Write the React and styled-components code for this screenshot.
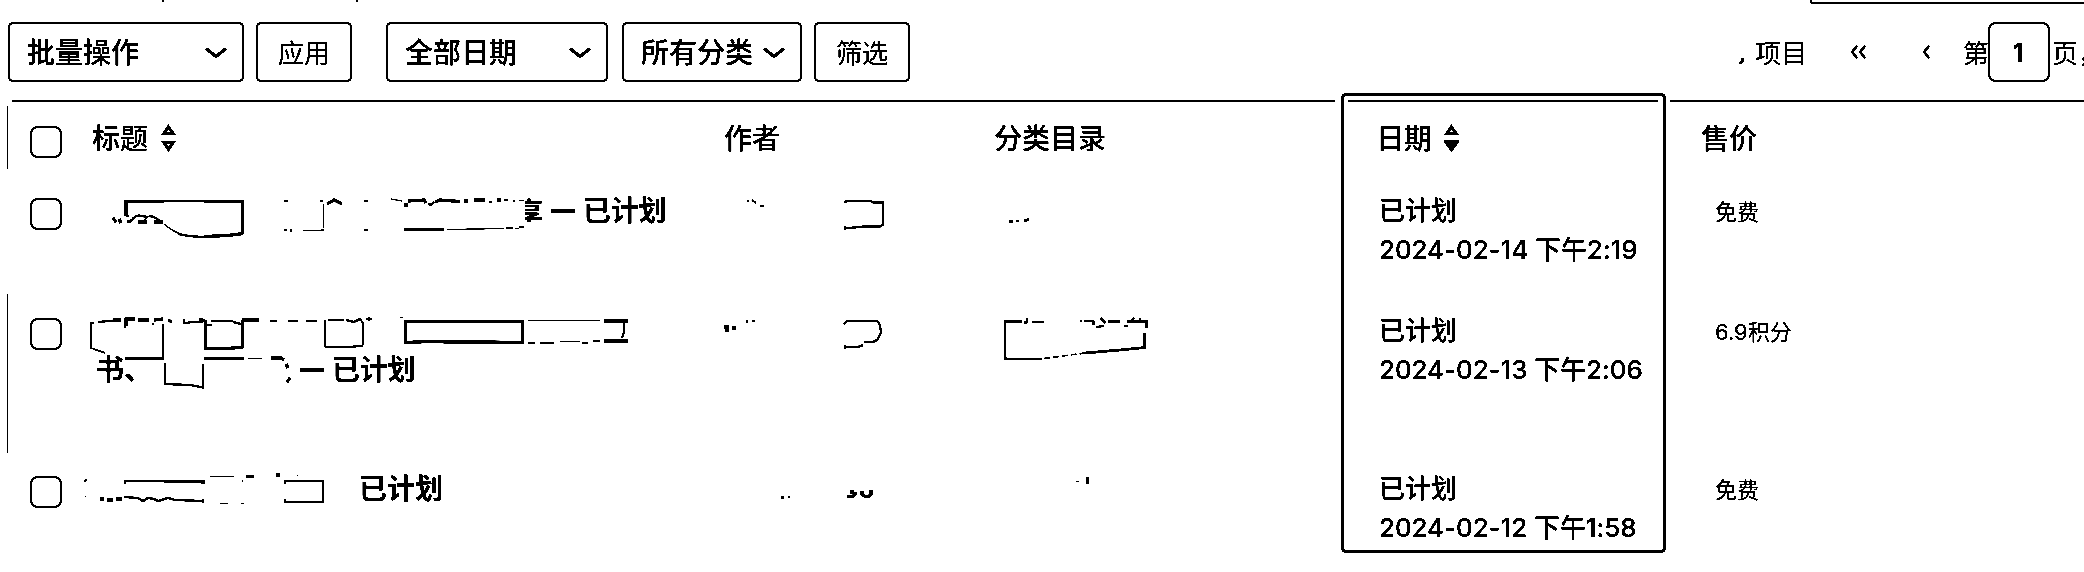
import React from "react";
import styled, { createGlobalStyle } from "styled-components";

const Global = createGlobalStyle`
  * { box-sizing: border-box; }
  body { margin: 0; background: #fff; overflow: hidden; }
`;

const Page = styled.div`
  position: relative;
  width: 2084px;
  height: 572px;
  overflow: hidden;
  background: #fff;
  color: #000;
  font-family: Inter, "Noto Sans CJK SC", sans-serif;
  font-size: 28px;
  line-height: 40px;
  filter: grayscale(1) brightness(0.76) contrast(30);
`;

const TopStrip = styled.div`
  display: flex;
  height: 4px;
  padding-left: 162px;
`;
const Divider = styled.span`
  width: 2px;
  height: 2px;
  flex: none;
  margin-right: 192px;
  background: #000;
`;
const SearchEdge = styled.span`
  width: 300px;
  height: 12px;
  flex: none;
  align-self: flex-end;
  margin-left: 1259px;
  border: 2px solid #000;
  border-radius: 3px;
  margin-left: 1260px;
`;

const Toolbar = styled.div`
  display: flex;
  align-items: center;
  height: 60px;
  margin: 18px 0 0 8px;
  white-space: nowrap;
`;
const Control = styled.div`
  display: flex;
  flex: none;
  align-items: center;
  justify-content: ${(p) => (p.$select ? "space-between" : "center")};
  width: ${(p) => p.$w}px;
  height: 60px;
  padding: ${(p) => (p.$select ? "2px 15px 0 17px" : "3px 0 0")};
  margin-right: ${(p) => p.$gap || 0}px;
  border: 2px solid #000;
  border-radius: 5px;
  font-size: ${(p) => (p.$select ? 28 : 26)}px;
  font-weight: ${(p) => (p.$select ? 500 : 400)};
`;
const Pager = styled.div`
  display: flex;
  flex: none;
  align-items: center;
  margin-left: 827px;
  font-size: 26px;
`;
const PagerText = styled.span`
  width: ${(p) => p.$w}px;
  flex: none;
  padding-top: 3px;
`;
const PageInput = styled.div`
  width: 62px;
  height: 60px;
  flex: none;
  border: 2px solid #000;
  border-radius: 8px;
  font-size: 25px;
  font-weight: 700;
  line-height: 58px;
  text-align: center;
  padding-right: 1px;
  margin-right: 2px;
`;

const TopRule = styled.div`
  display: grid;
  grid-template-columns: 1323px 310px 414px;
  column-gap: 12.5px;
  margin: 18px 0 4px 12px;
  height: 2px;
`;
const Rule = styled.i`
  background: #000;
`;

const Row = styled.div`
  display: grid;
  grid-template-columns: 76px 616px 280px 361px 349px 394px;
  height: ${(p) => p.$h}px;
  margin-left: 7px;
  border-left: 1px solid ${(p) => (p.$edge ? "#000" : "#fff")};
`;
const Cell = styled.div`
  display: grid;
  grid-template: 100% / 100%;
  min-width: 0;
  > * { grid-area: 1 / 1; }
`;
const Text = styled.div`
  padding: ${(p) => p.$t}px 0 0 ${(p) => p.$l}px;
  font-size: ${(p) => p.$size || 28}px;
  font-weight: ${(p) => p.$weight || 400};
  line-height: ${(p) => p.$lh || 40}px;
  letter-spacing: ${(p) => p.$track || 0}px;
  white-space: nowrap;
`;
const HeadText = styled(Text)`
  display: flex;
  align-items: flex-start;
  gap: ${(p) => p.$gap || 0}px;
  font-weight: 500;
  > svg { margin-top: 5px; }
`;
const Check = styled.span`
  width: 32px;
  height: 32px;
  margin: ${(p) => p.$t}px 0 0 22px;
  border: 2px solid #000;
  border-radius: 8px;
`;
const Mask = styled.svg`
  display: block;
  width: 100%;
  height: 100%;
  fill: none;
  stroke: #000;
  stroke-width: 2;
`;
const Clip = styled.span`
  display: inline-block;
  width: 18px;
  height: 26px;
  line-height: 34px;
  overflow: hidden;
  direction: rtl;
  vertical-align: top;
  margin: 5px 8px 0 0;
`;
const Dash = styled.span`
  display: inline-block;
  width: 24px;
  height: 4px;
  margin-right: 8px;
  vertical-align: 8px;
  background: #000;
`;
const Highlight = styled.div`
  position: absolute;
  left: 1341px;
  top: 93px;
  width: 325px;
  height: 460px;
  border: 3px solid #000;
  border-radius: 5px;
`;

const Chevron = () => (
  <svg width="22" height="12" viewBox="0 0 22 12" fill="none" stroke="#000" strokeWidth="3">
    <path d="M1 1.5 11 9.5 21 1.5" />
  </svg>
);

const Sort = ({ active }) => (
  <svg width="15" height="28" viewBox="0 0 15 28" fill="none" stroke="#000" strokeWidth="3">
    <path d="M7.5 3 12 9.5H3Z" />
    <path d="M3 18.5H12L7.5 25Z" fill={active ? "#000" : "none"} strokeWidth={active ? 4 : 3} />
  </svg>
);

const Left = ({ double }) => (
  <svg width={double ? 72 : 41} height="14" viewBox={`0 0 ${double ? 72 : 41} 14`} fill="none" stroke="#000" strokeWidth="2.2">
    <path d="M7 1 2 7 7 13" />
    {double && <path d="M15 1 10 7 15 13" />}
  </svg>
);

const columns = {
  title: [84, 616],
  author: [700, 280],
  category: [980, 361],
};

function Redacted({ col, row, children }) {
  const [x, w] = columns[col];
  return <Mask viewBox={`${x} ${row.y} ${w} ${row.h}`}>{children}</Mask>;
}

const rows = [
  {
    y: 169, h: 125, check: 29, date: "2024-02-14 下午2:19", price: "免费",
    status: (
      <Text $t={22} $l={441} $weight={700} $track={-0.2}>
        <Clip>享</Clip><Dash />已计划
      </Text>
    ),
    title: (
      <>
        <path strokeWidth="3" d="M124 201.5H164M204 201.5H243M242.5 200V234M126 200V216M204 236.5 228 235.5 243 233.5" />
        <path d="M164 201H204M126 216H129M178 234Q190 237 208 237" />
        <path strokeWidth="1.2" d="M164 224Q173 232 184 235M323.5 204V228M303 230.5H323M391 199 402 201M447 229.5 504 228.5M506 228H513M515 228.5H519M519 227H524M513 201H515M519 200.5H524" />
        <path strokeWidth="3" d="M113 218 116 222M119 219 121 223M127 222 131 221M138 222H147M154 222H163" />
        <path d="M131 221Q136 214 142 216L147 217 144 221M149 216 154 217 162 222M284 201H288M284 230H287M290 230.5H292M320 201H323M321 230H324M364 201H368M364 230H368" />
        <path strokeWidth="3" d="M327 204 334 200 342 204M408 201 424 200 426 203M404 205H408M404 229.5H444M435 202 440 200 460 201.5M464 201H468M474 200H485M497 200H501" />
        <path d="M428 204 431 205 434 202M489 202H492M504 200H508" />
      </>
    ),
    author: <><path d="M747 201H749M752 200 756 203M760 206H764" /><path d="M844 202H846V201H871L873 202.5H883V225L880 226.5H864L844 228.5M845 226V230" /></>,
    category: <path strokeWidth="2.5" d="M1009 221.5H1013M1016 221H1019M1024 221 1029 219.5" />,
  },
  {
    y: 294, h: 159, check: 24, date: "2024-02-13 下午2:06", price: "6.9积分",
    status: (
      <>
        <Text $t={56} $l={12} $weight={700}>书、</Text>
        <Text $t={56} $l={216} $weight={700} $track={-0.2}><Dash />已计划</Text>
      </>
    ),
    title: (
      <>
        <path strokeWidth="1.5" d="M94 323H91V348L105 353M125 328V325L128 323M248 358.5H262M528 320.5H600M528 343H535M540 343H554M560 341.5H580M582 343H588M593 341H600M400 317.5H403M211 321H233" />
        <path d="M98 322 120 320M163 324V357M154 324H152M184 319V323H190M188 322 203 322M233 322 241 324M206 325H212M165 363V384L190 385 203 387.5V364M270 321H277M288 321H298M306 321H317M325 320V347M363 322V345M325 347H350L363 345.5M328 320H344M346 320 354 322 360 319 363 323M366 319H372M369 317V321" />
        <path strokeWidth="3" d="M126 326V319H135M138 320H149M154 320 163 319M168 320 172 322M113 320H121M199 319 205 321M125 358.5H164M204 358.5H244M205.5 320V349M204 348.5H228L243 347M242.5 348V320M242 320H259M271 358H281L284 360M286 364 288 368M287 382 290 378M405.5 320V344M522.5 320V344M404 342.5 430 341.5 450 342 475 342 522 342.5M404 321.5H524M604 321H628M604 341H628" />
        <path d="M624 322V332L622 338M605 339V343" />
      </>
    ),
    author: <><path strokeWidth="3" d="M724 327H729M727 326V332M732 328H736" /><path d="M747 320V323M752 321H755M844 324 847 321H877L880 325 881 333 877 340 873 342H864M862 344V346L857 347H844M845 345V349" /></>,
    category: (
      <>
        <path strokeWidth="2.5" d="M1005 320V359H1042M1005 321.5H1022M1027 318V322L1024 323M1032 322H1044M1085 353 1120 350 1145 347.5M1144.5 349V333M1146.5 322V328M1084 321H1093L1094 325M1101 318 1105 323M1108 321.5H1120M1127 321.5H1148" />
        <path strokeWidth="1.4" strokeDasharray="6 3" d="M1044 358.5 1085 353" />
        <path d="M1096 327 1104 326M1124 326H1128M1131 321 1134 318M1140 318V322M1080 321H1082" />
      </>
    ),
  },
  {
    y: 453, h: 119, check: 23, date: "2024-02-12 下午1:58", price: "免费",
    status: <Text $t={16} $l={275} $weight={700}>已计划</Text>,
    title: (
      <>
        <path strokeWidth="1.3" d="M84 481H86M85 480H87M85 496.5H86M210 476.5H234M220 503.5H228M241 503.5H244M242.5 480V482M297 475.5H298" />
        <path d="M124 481H164M125 480V484M284 481H324M285 480V484M285 499V503M323 480V503M284 502H324" />
        <path strokeWidth="2.8" d="M164 481.5H204M203 480V484M100 499H104M107 500H113M116 499H122M246 476.5H254M276 475H280" />
        <path strokeWidth="2.2" d="M124 497 138 498 143 501 148 498 154 499 158 501 168 498 175 500 204 501M203 499V503" />
      </>
    ),
    author: <><path d="M781 497.5H784M788 497H790" /><path strokeWidth="3" d="M847 496.5H853L855 494V492M850 492H854M862 491V494L865 496.5H869L871 494V490" /></>,
    category: <><path strokeWidth="1.2" d="M1076 481.5H1079" /><path strokeWidth="3.5" d="M1087.5 477V484" /></>,
  },
];

export default function App() {
  return (
    <Page>
      <Global />
      <TopStrip><Divider /><Divider /><SearchEdge /></TopStrip>
      <Toolbar>
        <Control $select $w={236} $gap={12}>批量操作<Chevron /></Control>
        <Control $w={96} $gap={34}>应用</Control>
        <Control $select $w={222} $gap={14}>全部日期<Chevron /></Control>
        <Control $select $w={180} $gap={12}>所有分类<Chevron /></Control>
        <Control $w={96}>筛选</Control>
        <Pager>
          <svg width="18" height="24" viewBox="0 0 18 24"><path d="M4 19H6V20L3 24" fill="none" stroke="#000" strokeWidth="2.5" /></svg>
          <PagerText $w={95}>项目</PagerText>
          <Left double />
          <Left />
          <PagerText $w={25}>第</PagerText>
          <PageInput>1</PageInput>
          <PagerText $w={60}>页，</PagerText>
        </Pager>
      </Toolbar>
      <TopRule><Rule /><Rule /><Rule /></TopRule>
      <Row $h={63} $edge>
        <Check $t={20} />
        <HeadText $t={13} $l={8} $gap={13}>标题<Sort /></HeadText>
        <HeadText $t={13} $l={24}>作者</HeadText>
        <HeadText $t={13} $l={14}>分类目录</HeadText>
        <HeadText $t={13} $l={35} $gap={12}>日期<Sort active /></HeadText>
        <HeadText $t={13} $l={11}>售价</HeadText>
      </Row>
      {rows.map((row) => (
        <Row key={row.y} $h={row.h} $edge={row.y === 294}>
          <Check $t={row.check} />
          <Cell>
            {row.status}
            <Redacted col="title" row={row}>{row.title}</Redacted>
          </Cell>
          <Cell><Redacted col="author" row={row}>{row.author}</Redacted></Cell>
          <Cell><Redacted col="category" row={row}>{row.category}</Redacted></Cell>
          <Text $t={row.check - 7} $l={38} $size={26} $lh={39} $weight={500} $track={-0.1}>
            已计划<br />{row.date}
          </Text>
          <Text $t={row.check - 6} $l={25} $size={22}>{row.price}</Text>
        </Row>
      ))}
      <Highlight />
    </Page>
  );
}
